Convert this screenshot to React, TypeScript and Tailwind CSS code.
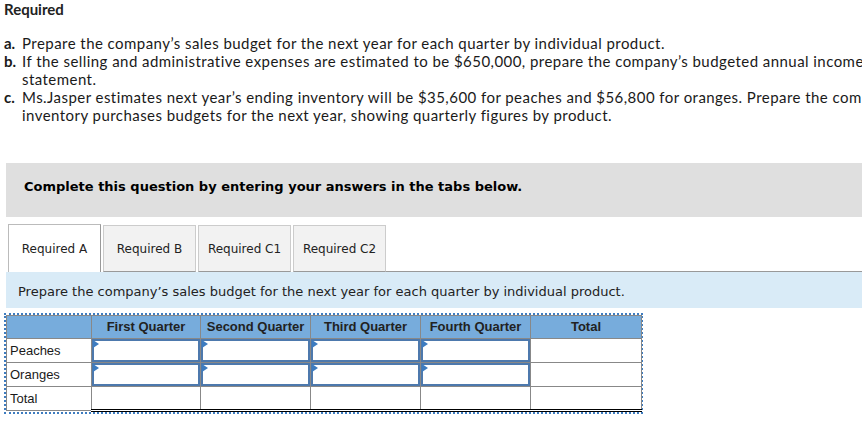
import React from 'react';

const body = { fontFamily: '"Lato", "Open Sans", sans-serif' };
const verdana = { fontFamily: '"DejaVu Sans", Verdana, sans-serif' };
const arial = { fontFamily: '"Liberation Sans", Arial, sans-serif' };

const tabs = ['Required A', 'Required B', 'Required C1', 'Required C2'];
const quarters = ['First Quarter', 'Second Quarter', 'Third Quarter', 'Fourth Quarter'];

const InputCell = () => (
  <td className="h-[24px] p-0 border border-[#888] relative">
    <div className="absolute inset-0 border-2 border-[#4d79ad]" />
    <div className="absolute left-[1px] top-[1px] w-0 h-0 border-y-[4px] border-y-transparent border-l-[6px] border-l-[#3d7cc0]" />
  </td>
);

export default function App() {
  return (
    <div className="w-[862px] h-[423px] overflow-hidden bg-white text-[#1a1a1a]" style={body}>
      <div className="pl-[4px] whitespace-nowrap text-[15px] leading-[18px]">
        <div className="font-bold text-[#222]">Required</div>
        <div className="mt-[16px] tracking-[0.45px]">
          <div className="flex">
            <span className="w-[18px] shrink-0 font-bold tracking-normal">a.</span>
            <span>Prepare the company’s sales budget for the next year for each quarter by individual product.</span>
          </div>
          <div className="flex">
            <span className="w-[18px] shrink-0 font-bold tracking-normal">b.</span>
            <div>
              <div>If the selling and administrative expenses are estimated to be $650,000, prepare the company’s budgeted annual income</div>
              <div>statement.</div>
            </div>
          </div>
          <div className="flex">
            <span className="w-[18px] shrink-0 font-bold tracking-normal">c.</span>
            <div>
              <div>Ms.Jasper estimates next year’s ending inventory will be $35,600 for peaches and $56,800 for oranges. Prepare the company’s</div>
              <div>inventory purchases budgets for the next year, showing quarterly figures by product.</div>
            </div>
          </div>
        </div>
      </div>

      <div className="ml-[6px] mt-[39px] h-[54px] bg-[#dfdfdf] flex items-center pl-[18px] pb-[7px] whitespace-nowrap">
        <span className="text-[13px] font-bold text-black" style={verdana}>
          Complete this question by entering your answers in the tabs below.
        </span>
      </div>

      <div className="ml-[8px] mt-[7px] flex items-end">
        {tabs.map((t, i) => (
          <div
            key={t}
            className={
              i === 0
                ? 'w-[93px] h-[48px] bg-white border border-b-0 border-[#bbb] border-r-[#999] flex items-center justify-center text-[12px] text-[#222]'
                : 'w-[93px] h-[47px] ml-[2px] bg-[#f2f2f2] border border-[#ccc] border-b-[#999] flex items-center justify-center text-[12px] text-[#222]'
            }
            style={verdana}
          >
            {t}
          </div>
        ))}
        <div className="flex-1 border-b border-[#999]" />
      </div>

      <div className="ml-[6px] h-[36px] bg-[#d9ebf7] flex items-center pl-[12px] pt-[3px] whitespace-nowrap">
        <span className="text-[13px] text-[#222]" style={verdana}>
          Prepare the company’s sales budget for the next year for each quarter by individual product.
        </span>
      </div>

      <div className="ml-[4px] mt-[5px] w-[639px] border-[2px] border-dotted border-[#3d7cc0]" style={arial}>
        <table className="border-collapse w-[635px] table-fixed text-[13px]">
          <colgroup>
            <col className="w-[85px]" />
            <col className="w-[109px]" />
            <col className="w-[110px]" />
            <col className="w-[110px]" />
            <col className="w-[110px]" />
            <col className="w-[111px]" />
          </colgroup>
          <thead>
            <tr className="bg-[#77acdc] h-[23px]">
              <th className="border border-[#888]" />
              {quarters.map(q => (
                <th key={q} className="border border-[#888] font-bold text-[#222] text-center">{q}</th>
              ))}
              <th className="border border-[#888] font-bold text-[#222] text-center">Total</th>
            </tr>
          </thead>
          <tbody>
            {['Peaches', 'Oranges'].map(r => (
              <tr key={r}>
                <td className="h-[24px] border border-[#888] pl-[3px] text-left">{r}</td>
                <InputCell />
                <InputCell />
                <InputCell />
                <InputCell />
                <td className="border border-[#888]" />
              </tr>
            ))}
            <tr>
              <td className="h-[24px] border border-[#888] pl-[3px]">Total</td>
              {[0, 1, 2, 3, 4].map(i => (
                <td key={i} className="border-x border-x-[#888] border-t border-t-black border-b-[3px] border-b-black [border-bottom-style:double]" />
              ))}
            </tr>
          </tbody>
        </table>
      </div>
    </div>
  );
}
